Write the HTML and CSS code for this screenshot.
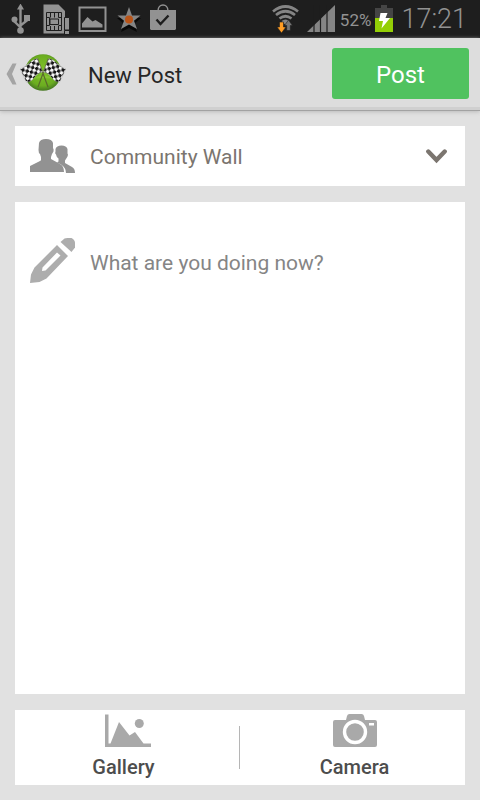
FILE: index.html
```html
<!DOCTYPE html>
<html lang="en">
<head>
<meta charset="utf-8">
<meta name="viewport" content="width=device-width, initial-scale=1">
<title>New Post</title>
<link rel="stylesheet" href="styles.css">
</head>
<body>
<div class="status">
  <div class="status-group notices">
    <svg width="20" height="30" viewBox="11 5 20 30" aria-hidden="true"><g fill="none" stroke="#929292" stroke-width="2.4"><path d="M20.500 9v22M14.500 19v3.500l6 6M27 17v4.500l-6.500 5"/></g><g fill="#929292"><path d="M20.500 4.500l3.500 6h-7z"/><circle cx="14.500" cy="20.500" r="3"/><path d="M24 16h6v6h-6z"/><circle cx="20.500" cy="31.500" r="3.300"/></g></svg>
    <svg width="27" height="30" viewBox="43 4 27 30" aria-hidden="true"><path fill="#929292" d="M43.500 4.500h15l6.500 6.500v22.500h-21.500z"/><g fill="none" stroke="#1e1e1e" stroke-width="1"><path d="M46.500 12.500h15v18h-15zM50.500 13v4.500M54.500 13v4.500M58.500 13v4.500M50.500 26v4.500M54.500 26v4.500M58.500 26v4.500M50 19h8.500v5.500h-8.500zM47 17.500h2.500v8H47M61 17.500h-2.500M61 25.500h-2.500"/></g><path fill="#929292" stroke="#1e1e1e" stroke-width="1" d="M64.500 17.500h5v12.500h-5zM64.500 30.500h5v4h-5z"/></svg>
    <svg width="30" height="27" viewBox="77 6 30 27" aria-hidden="true"><path fill="none" stroke="#929292" stroke-width="2" d="M78.500 7.500h26v23.500h-26z"/><path fill="#929292" d="M81 27.500v-4l5.500-6.500 5 4.500 3-1.500 7 4.500v3z"/></svg>
    <svg width="26" height="26" viewBox="115 6 26 26" aria-hidden="true"><path fill="#090909" d="M128 9l3 9h9l-7 6 3 8-8-4-8 4 3-8-7-6h9z"/><path fill="#858585" d="M128 7l3 8.500h8.500l-6.500 5.300 3 8.200-8-4.500-8 4.500 3-8.200-6.500-5.300h8.500z"/><circle cx="128" cy="19.500" r="4" fill="#ba5417"/></svg>
    <svg width="26" height="30" viewBox="151 4 26 30" aria-hidden="true"><path fill="#929292" d="M151 10h26v19l-1 1h-24l-1-1z"/><path fill="none" stroke="#929292" stroke-width="1.500" d="M159 11c0-8 10-8 10 0"/><path fill="none" stroke="#1e1e1e" stroke-width="2.400" d="M157.500 19.500l4 4.500 8-8.500"/></svg>
  </div>
  <div class="status-group system">
    <svg width="28" height="28" viewBox="272 5 28 28" aria-hidden="true"><g fill="none" stroke="#858585" stroke-width="2.700"><path d="M273 11.500q12.500-10 25 0M276 15q9.500-7.500 19 0M279.500 18.500q6-4.500 12 0"/></g><path fill="#858585" d="M281.500 21q4-3 8 0l-4 4z"/><path fill="#ff9d24" stroke="#1e1e1e" stroke-width=".6" d="M279.500 22h4v5h2.500l-4.500 6-4.500-6h2.500z"/><path fill="#777" stroke="#1e1e1e" stroke-width=".6" d="M288.500 20l4 5.500h-2.200v5h-3.600v-5h-2.200z"/></svg>
    <svg width="29" height="28" viewBox="307 5 29 28" aria-hidden="true"><path fill="#858585" d="M307 32L335 5v27z"/><path stroke="#1e1e1e" stroke-width="1.200" d="M314 5v28M320.500 5v28M327 5v28"/></svg>
    <span class="percent">52%</span>
    <svg width="18" height="28" viewBox="375 5 18 28" aria-hidden="true"><path fill="#454545" d="M381 5h6v3h6v10h-18v-10h6z"/><path fill="#94cf06" d="M375 18h18v14h-18z"/><path fill="#fff" d="M380.500 13h7l-2 5h4.500l-8.500 10.500 1.500-7.500h-4z"/></svg>
    <time class="clock">17:21</time>
  </div>
</div>

<header class="bar">
  <a class="home" href="#" aria-label="Back">
    <svg width="61" height="38" viewBox="6 54 61 38" aria-hidden="true">
      <defs>
        <radialGradient id="turf" cx=".5" cy=".45" r=".55"><stop offset="0" stop-color="#82c42b"/><stop offset=".75" stop-color="#6bad20"/><stop offset="1" stop-color="#467722"/></radialGradient>
        <pattern id="checkL" width="6.400" height="6.400" patternUnits="userSpaceOnUse" patternTransform="translate(37 59) rotate(-33) skewX(-4)"><path fill="#f7f7f7" d="M0 0h6.400v6.400H0z"/><path fill="#151515" d="M0 0h3.200v3.200H0zM3.200 3.200h3.200v3.200h-3.200z"/></pattern>
        <pattern id="checkR" width="6.400" height="6.400" patternUnits="userSpaceOnUse" patternTransform="translate(49 59) rotate(33) skewX(4)"><path fill="#f7f7f7" d="M0 0h6.400v6.400H0z"/><path fill="#151515" d="M3.200 0h3.200v3.200h-3.200zM0 3.200h3.200v3.200H0z"/></pattern>
      </defs>
      <path fill="#a4a4a4" d="M12.500 63.500h4L12 74l4.500 10.500h-4L6.500 74z"/>
      <circle cx="43" cy="72.500" r="18.300" fill="url(#turf)"/>
      <path fill="#8fcc3c" opacity=".6" d="M29 80q14-9 28 0-14-4-28 0z"/>
      <path fill="none" stroke="#5a6a2c" stroke-width="1.200" d="M37.500 58.500L48 87M48.500 58.500L38 87"/>
      <path fill="url(#checkL)" stroke="#999" stroke-width=".4" d="M37.300 58.500q-5 1-8.500 5-4 4-8.600 5.500l6.500 13.500q5-1 8-5.500 3-4 7.800-5z"/>
      <path fill="url(#checkR)" stroke="#999" stroke-width=".4" d="M48.700 58.500q5 1 8.500 5 4 4 8.600 5.500l-6.500 13.500q-5-1-8-5.500-3-4-7.800-5z"/>
    </svg>
  </a>
  <h1 class="title">New Post</h1>
  <button class="post" type="submit" form="composer">Post</button>
</header>

<form class="composer" id="composer">
  <div class="card audience">
    <svg width="45" height="34" viewBox="30 139 45 34" aria-hidden="true"><path fill="#929292" d="M39 143q1-4 7-4t7 4v5q1 1 .5 3.500l-1.500 2.500-1 3v2l9 5q4 2 4 8H30v-6l10-5q1-.5 1-1v-3l-1-3q-1.500-1-1.500-4z"/><path fill="#929292" d="M55.500 149q1-3.500 6-3.500t6 3.500v4.500q1 1 0 3l-1.200 2-1.300 2v2.500l7 4q3 1.500 3 6h-9q0-5.500-5-8.500l-4-2 1.500-1v-3q-2-1-2.500-4-1.500-1-.5-3z"/></svg>
    <select class="audience-select" aria-label="Post to"><option>Community Wall</option></select>
    <svg class="chevron" width="21" height="15" viewBox="0 0 21 15" aria-hidden="true"><path fill="none" stroke="#7b756f" stroke-width="4.400" stroke-linecap="round" d="M2.300 2.500l8.200 8.500 8.200-8.500"/></svg>
  </div>

  <div class="card message">
    <svg width="45" height="45" viewBox="30 238 45 45" aria-hidden="true"><path fill="#adadad" fill-rule="evenodd" d="M57 245l11 11-21.500 22.500-7 3.500L30 283l1-8.500 3.500-7zM57 252.500l-14.500 15-.5 3.500 3.500-.5 15-15z"/><path fill="#adadad" d="M60.500 242l4-3.500q1-.5 3-.5h4q3.500 2 3.500 5v4.500l-3.500 4.500z"/></svg>
    <textarea class="message-text" aria-label="Message" placeholder="What are you doing now?"></textarea>
  </div>

  <div class="card attach">
    <button class="attach-button gallery" type="button">
      <svg width="46" height="33" viewBox="104 714 46 33" aria-hidden="true"><path fill="#a9a9a9" d="M104 714.500h3.500v29h2l8.500-21.500 10.500 13.500 5.500-3.500 8.500 11.500h7.500v3.500H104z"/><circle cx="138.300" cy="723.500" r="4.500" fill="#a9a9a9"/></svg>
      <span>Gallery</span>
    </button>
    <button class="attach-button camera" type="button">
      <svg width="44" height="33" viewBox="333 714 44 33" aria-hidden="true"><path fill="#a9a9a9" d="M335 720h11l1-4q.5-2 2.500-2h12q2 0 2.500 2l1 4h10q2 0 2 2v23q0 2-2 2h-40q-2 0-2-2v-23q0-2 2-2z"/><circle cx="355" cy="732" r="10.500" fill="#a9a9a9" stroke="#fff" stroke-width="3.400"/><path fill="#fff" d="M369 723h5v2.500h-5z"/></svg>
      <span>Camera</span>
    </button>
  </div>
</form>
</body>
</html>
```
FILE: styles.css
```css
* {
  box-sizing: border-box;
}

body {
  margin: 0;
  min-height: 100vh;
  display: flex;
  flex-direction: column;
  background: #e1e1e1;
  font-family: Roboto, "Noto Sans", sans-serif;
}

svg {
  display: block;
  flex: none;
}

button,
select,
textarea {
  margin: 0;
  padding: 0;
  border: 0;
  border-radius: 0;
  background: none;
  font: inherit;
  appearance: none;
}

.status {
  display: flex;
  justify-content: space-between;
  height: 38px;
  padding: 4px 13px 0 11px;
  background: #1e1e1e;
  color: #929292;
}

.status-group {
  display: flex;
  align-items: center;
  height: 30px;
}

.notices {
  gap: 8px;
}

.notices svg:first-child {
  margin-right: 4px;
}

.system {
  gap: 4px;
}

.system svg:first-child {
  margin-right: 3px;
}

.percent {
  padding-top: 2px;
  font-size: 17px;
  line-height: 28px;
}

.clock {
  margin-left: 4px;
  font-size: 27px;
  line-height: 30px;
  font-weight: 300;
}

.bar {
  display: flex;
  align-items: center;
  height: 73px;
  padding: 0 11px 3px 6px;
  background: linear-gradient(#ddd 69px, #d0d0d0 69px);
  border-bottom: 1px solid #a2a2a2;
  box-shadow: 0 1px 4px #bbb;
}

.title {
  flex: 1;
  margin: 0 0 0 21px;
  padding-top: 6px;
  color: #262626;
  font-size: 22px;
  line-height: 30px;
  font-weight: 400;
}

.post {
  width: 137px;
  height: 51px;
  margin-top: 2px;
  padding-top: 2px;
  border-radius: 3px;
  background: #50c25f;
  color: #fff;
  font-size: 24px;
  cursor: pointer;
}

.composer {
  flex: 1;
  display: flex;
  flex-direction: column;
  gap: 16px;
  padding: 15px;
}

.card {
  display: flex;
  background: #fff;
}

.audience {
  position: relative;
  align-items: center;
  height: 60px;
  padding: 0 15px;
}

.audience-select {
  flex: 1;
  height: 60px;
  margin-left: 15px;
  padding-top: 2px;
  color: #7b756f;
  font-size: 21px;
}

.chevron {
  position: absolute;
  right: 18px;
  pointer-events: none;
}

.message {
  flex: 1;
  padding: 36px 15px 15px;
}

.message-text {
  flex: 1;
  min-width: 0;
  margin: 10px 0 0 15px;
  color: #555;
  font-size: 21px;
  line-height: 30px;
  resize: none;
  outline: 0;
}

.message-text::placeholder {
  color: #858585;
  opacity: 1;
}

.attach {
  display: grid;
  grid-template-columns: 1fr 1fr;
  height: 75px;
}

.attach-button {
  position: relative;
  display: flex;
  flex-direction: column;
  align-items: center;
  padding-top: 4px;
  color: #4d4d4d;
  font-size: 20px;
  line-height: 24px;
  font-weight: 500;
  cursor: pointer;
}

.attach-button span {
  margin-top: 8px;
}

.gallery span {
  padding-right: 8px;
}

.camera {
  padding-left: 4px;
}

.camera::before {
  content: "";
  position: absolute;
  left: -1px;
  top: 16px;
  width: 1px;
  height: 43px;
  background: #b5b5b5;
}
```
